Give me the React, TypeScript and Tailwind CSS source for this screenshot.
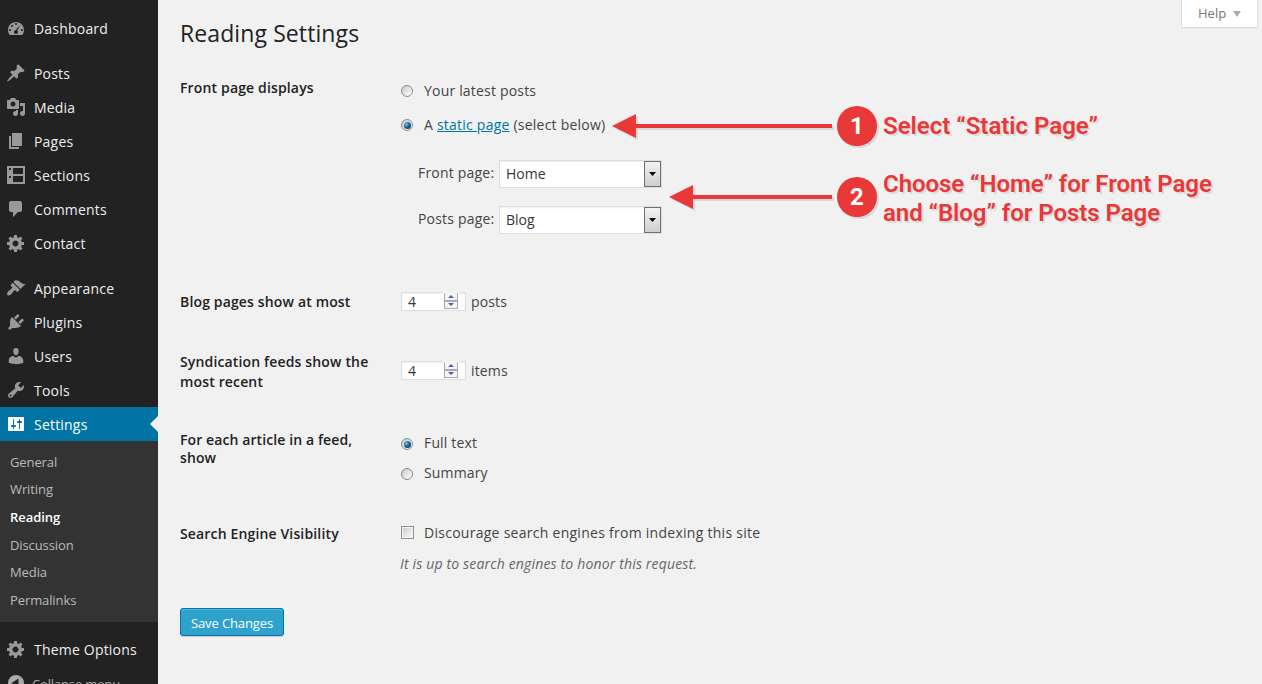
import React from "react";

const paths = {
  dashboard:
    "M3.76 17h12.48c1.1-1.37 1.76-3.11 1.76-5 0-4.42-3.58-8-8-8s-8 3.58-8 8c0 1.89.66 3.63 1.76 5zM10 5c.55 0 1 .45 1 1s-.45 1-1 1-1-.45-1-1 .45-1 1-1zM6 7c.55 0 1 .45 1 1s-.45 1-1 1-1-.45-1-1 .45-1 1-1zM14.6 6.4L11.2 12.6c.5.4.8.9.8 1.5 0 1.1-.9 2-2 2s-2-.9-2-2c0-.9.6-1.7 1.4-1.9zM4 11c.55 0 1 .45 1 1s-.45 1-1 1-1-.45-1-1 .45-1 1-1zm12 0c.55 0 1 .45 1 1s-.45 1-1 1-1-.45-1-1 .45-1 1-1z",
  pin: "M10.44 3.02l1.82-1.82 6.36 6.35-1.83 1.82c-1.05-.68-2.48-.57-3.41.36l-.75.75c-.92.93-1.04 2.35-.35 3.41l-1.83 1.82-2.41-2.41-2.8 2.79c-.42.42-3.38 2.71-3.8 2.29s1.86-3.39 2.28-3.81l2.79-2.79L4.1 9.36l1.83-1.82c1.05.69 2.48.57 3.4-.36l.75-.75c.93-.92 1.05-2.35.36-3.41z",
  media:
    "M13 11V4c0-.55-.45-1-1-1h-1.67L9 1H5L3.67 3H2c-.55 0-1 .45-1 1v7c0 .55.45 1 1 1h10c.55 0 1-.45 1-1zM7 4.5c1.38 0 2.5 1.12 2.5 2.5S8.38 9.5 7 9.5 4.5 8.38 4.5 7 5.62 4.5 7 4.5zM14 6h5v10.5c0 1.38-1.12 2.5-2.5 2.5S14 17.88 14 16.5s1.12-2.5 2.5-2.5c.17 0 .34.02.5.05V9h-3V6zm-4 8.05V13h2v3.5c0 1.38-1.12 2.5-2.5 2.5S7 17.88 7 16.5 8.12 14 9.5 14c.17 0 .34.02.5.05z",
  page: "M6 15V2h10v13H6zm-1 1h8v2H3V5h2v11z",
  sections: "M1 1h18v18H1zM3 3v2h2V3zM3 11v2h2v-2zM7 3v6h10V3zM7 11v6h10v-6z",
  comments: "M5 2h9c1.1 0 2 .9 2 2v7c0 1.1-.9 2-2 2h-2l-5 5v-5H5c-1.1 0-2-.9-2-2V4c0-1.1.9-2 2-2z",
  gear: "M18 12h-2.18c-.17.7-.44 1.35-.81 1.93l1.54 1.54-2.1 2.1-1.54-1.54c-.58.36-1.23.63-1.91.79V19H8v-2.18c-.68-.16-1.33-.43-1.91-.79l-1.54 1.54-2.12-2.12 1.54-1.54c-.36-.58-.63-1.23-.79-1.91H1V9.03h2.17c.16-.7.44-1.35.8-1.94L2.43 5.55l2.1-2.1 1.54 1.54c.58-.37 1.24-.64 1.93-.81V2h3v2.18c.68.16 1.33.43 1.91.79l1.54-1.54 2.12 2.12-1.54 1.54c.36.59.64 1.24.8 1.94H18V12zm-8.5 1.5c1.66 0 3-1.34 3-3s-1.34-3-3-3-3 1.34-3 3 1.34 3 3 3z",
  appearance:
    "M14.48 11.06L7.41 3.99l1.5-1.5c.5-.56 2.3-.47 3.51.32 1.21.8 1.43 1.28 2.91 2.1 1.18.64 2.45 1.26 4.45.85zm-.71.71L6.7 4.7 4.93 6.47c-.39.39-.39 1.02 0 1.41l1.06 1.06c.39.39.39 1.03 0 1.42-.6.6-1.43 1.11-2.21 1.69-.35.26-.7.53-1.01.84C1.43 14.23.4 16.08 1.4 17.07c.99 1 2.84-.03 4.18-1.36.31-.31.58-.66.85-1.02.57-.78 1.08-1.61 1.69-2.21.39-.39 1.02-.39 1.41 0l1.06 1.06c.39.39 1.02.39 1.41 0z",
  plugins:
    "M13.11 4.36L9.87 7.6 8 5.73l3.24-3.24c.35-.34 1.05-.2 1.56.32.52.51.66 1.21.31 1.55zm-8 1.77l.91-1.12 9.01 9.01-1.19.84c-.71.71-2.63 1.16-3.82 1.16H6.14L4.9 17.26c-.59.59-1.54.59-2.12 0-.59-.58-.59-1.53 0-2.12l1.24-1.24v-3.88c0-1.13.4-3.19 1.09-3.89zm7.26 3.97l3.24-3.24c.34-.35 1.04-.21 1.55.31.52.51.66 1.21.31 1.55l-3.24 3.25z",
  users:
    "M10 9.25c-2.27 0-2.73-3.44-2.73-3.44C7 4.02 7.82 2 9.97 2c2.16 0 2.98 2.02 2.71 3.81 0 0-.41 3.44-2.68 3.44zm0 2.57L12.72 10c2.39 0 4.52 2.33 4.52 4.53v2.49s-3.65 1.13-7.24 1.13c-3.65 0-7.24-1.13-7.24-1.13v-2.49c0-2.25 1.94-4.48 4.47-4.48z",
  tools:
    "M16.68 9.77c-1.34 1.34-3.3 1.67-4.95.99l-5.41 6.52c-.99.99-2.59.99-3.58 0s-.99-2.59 0-3.57l6.52-5.42c-.68-1.65-.35-3.61.99-4.95 1.28-1.28 3.12-1.62 4.72-1.06l-2.89 2.89 2.82 2.82 2.86-2.87c.53 1.58.18 3.39-1.08 4.65zM3.81 16.21c.4.39 1.04.39 1.43 0 .4-.4.4-1.04 0-1.43-.39-.4-1.03-.4-1.43 0-.39.39-.39 1.03 0 1.43z",
  settings:
    "M18 16V4c0-.55-.45-1-1-1H3c-.55 0-1 .45-1 1v12c0 .55.45 1 1 1h14c.55 0 1-.45 1-1zM8 11h1c.55 0 1 .45 1 1s-.45 1-1 1H8v1.5c0 .28-.22.5-.5.5s-.5-.22-.5-.5V13H6c-.55 0-1-.45-1-1s.45-1 1-1h1V5.5c0-.28.22-.5.5-.5s.5.22.5.5V11zm5-2h-1c-.55 0-1-.45-1-1s.45-1 1-1h1V5.5c0-.28.22-.5.5-.5s.5.22.5.5V7h1c.55 0 1 .45 1 1s-.45 1-1 1h-1v5.5c0 .28-.22.5-.5.5s-.5-.22-.5-.5V9z",
  collapse: "M10 2a8 8 0 1 0 0 16a8 8 0 0 0 0-16zM12.5 5.5v9L5.5 10z",
};

type IconName = keyof typeof paths;

function MenuItem({ icon, label, active = false }: { icon: IconName; label: string; active?: boolean }) {
  return (
    <a
      className={
        active
          ? "relative flex h-[34px] shrink-0 items-center bg-[#0074a2] pl-[6px] text-white"
          : "flex h-[34px] shrink-0 items-center pl-[6px] text-[#eee]"
      }
    >
      <svg viewBox="0 0 20 20" className={active ? "size-5 shrink-0 fill-white" : "size-5 shrink-0 fill-[#999]"}>
        <path fillRule="evenodd" d={paths[icon]} />
      </svg>
      <span className="ml-2 whitespace-nowrap pt-[2px] text-[14px] leading-[18px] tracking-[0.2px]">{label}</span>
      {active && (
        <svg viewBox="0 0 8 16" className="absolute right-0 top-[9px] h-4 w-2 fill-[#f1f1f1]">
          <path d="M8 0v16L0 8z" />
        </svg>
      )}
    </a>
  );
}

function Radio({ checked = false }: { checked?: boolean }) {
  return (
    <span className="flex size-3 shrink-0 items-center justify-center rounded-full border border-[#8a8a8a] bg-linear-to-br from-[#c9c9c9] to-white">
      {checked && <span className="size-[7px] rounded-full bg-radial-[at_35%_35%] from-[#6cc8ee] via-[#135a86] to-[#0a2a45]" />}
    </span>
  );
}

function Select({ value }: { value: string }) {
  return (
    <div className="flex h-7 w-[163px] shrink-0 border border-[#ddd] bg-white shadow-[inset_0_1px_2px_rgba(0,0,0,0.07)]">
      <span className="flex-1 pl-[6px] text-[14px] leading-[26px] text-[#32373c]">{value}</span>
      <span className="flex h-[26px] w-[17px] items-center justify-center border border-[#707070] bg-linear-to-b from-[#f2f2f2] to-[#cfcfcf]">
        <svg viewBox="0 0 7 4" className="h-1 w-[7px] fill-black">
          <path d="M0 0h7L3.5 4z" />
        </svg>
      </span>
    </div>
  );
}

function NumberField({ value }: { value: string }) {
  return (
    <div className="flex h-[19px] w-[65px] border border-[#ddd] bg-white shadow-[inset_0_1px_2px_rgba(0,0,0,0.07)]">
      <span className="w-[41px] pl-[6px] text-[14px] leading-[18px] text-[#32373c]">{value}</span>
      <svg viewBox="0 0 16 17" className="-mt-px h-[17px] w-4">
        <path d="M0 0h16v17H0z" fill="#fff" />
        <path d="M1 1h14v16H1z" fill="#a9abb0" />
        <path d="M2 0h12v8H2zM2 10h12v6H2z" fill="#f4f4f4" />
        <path d="M5 6h6L8 3zM5 11h6l-3 3z" fill="#4a5fa5" />
      </svg>
    </div>
  );
}

function Arrow({ wide = false }: { wide?: boolean }) {
  return (
    <svg
      viewBox={wide ? "0 0 220 24" : "57 0 163 24"}
      className={
        wide
          ? "h-6 w-[220px] overflow-visible fill-[#e83838] drop-shadow-[2px_2px_0_rgba(0,0,0,0.1)]"
          : "h-6 w-[163px] overflow-visible fill-[#e83838] drop-shadow-[2px_2px_0_rgba(0,0,0,0.1)]"
      }
    >
      <path d={wide ? "M0 12L24 0v10h196v4H24v10z" : "M57 12L81 0v10h139v4H81v10z"} />
    </svg>
  );
}

function Badge({ n }: { n: string }) {
  return (
    <span className="flex size-10 shrink-0 items-center justify-center rounded-full bg-[#e83838] font-[Roboto] text-[24px] font-bold text-white shadow-[2px_2px_0_rgba(0,0,0,0.1)]">
      {n}
    </span>
  );
}

const submenu = ["General", "Writing", "Reading", "Discussion", "Media", "Permalinks"];
const th = "w-[220px] shrink-0 text-[14px] font-semibold tracking-[0.15px] text-[#222]";

export default function App() {
  return (
    <div className="flex h-[684px] w-[1262px] overflow-hidden bg-[#f1f1f1] font-['Open_Sans',sans-serif] text-[14px] text-[#444]">
      <aside className="flex w-[158px] shrink-0 flex-col overflow-hidden bg-[#222] pt-[11px]">
        <MenuItem icon="dashboard" label="Dashboard" />
        <div className="h-[11px] shrink-0" />
        <MenuItem icon="pin" label="Posts" />
        <MenuItem icon="media" label="Media" />
        <MenuItem icon="page" label="Pages" />
        <MenuItem icon="sections" label="Sections" />
        <MenuItem icon="comments" label="Comments" />
        <MenuItem icon="gear" label="Contact" />
        <div className="h-[11px] shrink-0" />
        <MenuItem icon="appearance" label="Appearance" />
        <MenuItem icon="plugins" label="Plugins" />
        <MenuItem icon="users" label="Users" />
        <MenuItem icon="tools" label="Tools" />
        <MenuItem icon="settings" label="Settings" active />
        <div className="h-[181px] shrink-0 bg-[#333] pl-[10px] pt-[7.6px]">
          {submenu.map((s) => (
            <div
              key={s}
              className={
                s === "Reading"
                  ? "h-[27.66px] text-[13px] font-semibold leading-[27.66px] tracking-[-0.05px] text-white"
                  : "h-[27.66px] text-[13px] leading-[27.66px] tracking-[-0.1px] text-[#bbb]"
              }
            >
              {s}
            </div>
          ))}
        </div>
        <div className="h-[10px] shrink-0" />
        <MenuItem icon="gear" label="Theme Options" />
        <div className="flex h-[34px] shrink-0 items-center pl-[6px] text-[13px] tracking-[-0.15px] text-[#aaa]">
          <svg viewBox="0 0 20 20" className="size-5 fill-[#aaa]">
            <path fillRule="evenodd" d={paths.collapse} />
          </svg>
          <span className="ml-[6px] whitespace-nowrap pt-[4px]">Collapse menu</span>
        </div>
      </aside>

      <main className="flex min-w-0 flex-1 flex-col pl-[22px] pr-1">
        <header className="flex h-[76px] justify-between">
          <h1 className="pt-[19px] text-[23px] leading-[29px] tracking-[0.1px] text-[#222]">Reading Settings</h1>
          <div className="flex h-[28px] w-[77px] items-center border border-t-0 border-[#ddd] bg-white pl-4 text-[13px] text-[#777] shadow-[0_1px_1px_-1px_rgba(0,0,0,0.1)]">
            Help
            <svg viewBox="0 0 8 6" className="ml-[7px] h-[6px] w-2 fill-[#aaa]">
              <path d="M0 0h8L4 6z" />
            </svg>
          </div>
        </header>

        <section className="flex h-[204px]">
          <div className={th}>
            <div className="pt-[2px] leading-5">Front page displays</div>
          </div>
          <div className="flex w-[261px] shrink-0 flex-col pl-[1px]">
            <label className="flex h-[30px] items-center gap-[11px] tracking-[0.19px]">
              <Radio />
              <span className="pb-[2px]">Your latest posts</span>
            </label>
            <label className="mt-1 flex h-[30px] items-center gap-[11px] tracking-[0.23px]">
              <Radio checked />
              <span className="whitespace-nowrap pb-[2px]">
                A <a className="text-[#0074a2] underline">static page</a> (select below)
              </span>
            </label>
            <div className="mt-5 flex h-7 pl-[17px]">
              <span className="w-[81px] shrink-0 leading-[26px] tracking-[0.2px]">Front page:</span>
              <Select value="Home" />
            </div>
            <div className="mt-[18px] flex h-7 pl-[17px]">
              <span className="w-[81px] shrink-0 leading-[26px] tracking-[0.2px]">Posts page:</span>
              <Select value="Blog" />
            </div>
          </div>
          <div className="flex w-[560px] flex-col pt-[30px]">
            <div className="-ml-[49px] flex h-10 items-center">
              <Arrow wide />
              <div className="ml-[5px] flex items-center gap-[6px]">
                <Badge n="1" />
                <span className="whitespace-nowrap font-[Roboto] text-[24px] font-semibold leading-[29px] text-[#e83838] [text-shadow:2px_2px_0_rgba(0,0,0,0.1)]">
                  Select “Static Page”
                </span>
              </div>
            </div>
            <div className="mt-[21px] flex h-[60px] items-center pl-2">
              <Arrow />
              <div className="ml-[5px] flex items-center gap-[6px]">
                <Badge n="2" />
                <span className="whitespace-nowrap pt-[4px] font-[Roboto] text-[24px] font-semibold leading-[29px] tracking-[-0.05px] text-[#e83838] [text-shadow:2px_2px_0_rgba(0,0,0,0.1)]">
                  Choose “Home” for Front Page
                  <br />
                  and “Blog” for Posts Page
                </span>
              </div>
            </div>
          </div>
        </section>

        <section className="flex h-[71px] pt-[12px]">
          <div className={th}>
            <div className="leading-5">Blog pages show at most</div>
          </div>
          <div className="-mt-px flex h-5 items-center gap-[5px] pl-[1px]">
            <NumberField value="4" />
            <span className="tracking-[0.15px]">posts</span>
          </div>
        </section>

        <section className="flex h-[78px]">
          <div className={th}>
            <div className="w-[200px] pt-px leading-5">Syndication feeds show the most recent</div>
          </div>
          <div className="mt-[9px] flex h-5 items-center gap-[5px] pl-[1px]">
            <NumberField value="4" />
            <span className="tracking-[0.15px]">items</span>
          </div>
        </section>

        <section className="flex h-[94px]">
          <div className={th}>
            <div className="w-[200px] pt-[2px] leading-[18px] tracking-[0.1px]">For each article in a feed, show</div>
          </div>
          <div className="flex flex-col pl-[1px] tracking-[0.15px]">
            <label className="flex h-[30px] items-center gap-[11px]">
              <Radio checked />
              <span className="pb-[4px]">Full text</span>
            </label>
            <label className="flex h-[30px] items-center gap-[11px]">
              <Radio />
              <span className="pb-[4px]">Summary</span>
            </label>
          </div>
        </section>

        <section className="flex h-[85px]">
          <div className={th}>
            <div className="leading-[22px]">Search Engine Visibility</div>
          </div>
          <div className="-mt-px flex flex-col">
            <label className="flex h-5 items-center gap-[10px] pl-[1px] tracking-[0.27px]">
              <span className="size-[13px] border border-[#8e8f8f] bg-linear-to-br from-[#c4c8cf] to-white shadow-[inset_0_0_0_1px_#f4f4f4]" />
              Discourage search engines from indexing this site
            </label>
            <p className="mt-[12px] leading-5 tracking-[0.16px] italic text-[#666]">It is up to search engines to honor this request.</p>
          </div>
        </section>

        <button className="h-7 w-[104px] rounded-[3px] border border-[#0074a2] bg-[#2ea2cc] pt-px text-[13px] leading-[26px] tracking-[-0.1px] text-white shadow-[inset_0_1px_0_rgba(120,200,230,0.5),0_1px_0_rgba(0,0,0,0.15)]">
          Save Changes
        </button>
      </main>
    </div>
  );
}
